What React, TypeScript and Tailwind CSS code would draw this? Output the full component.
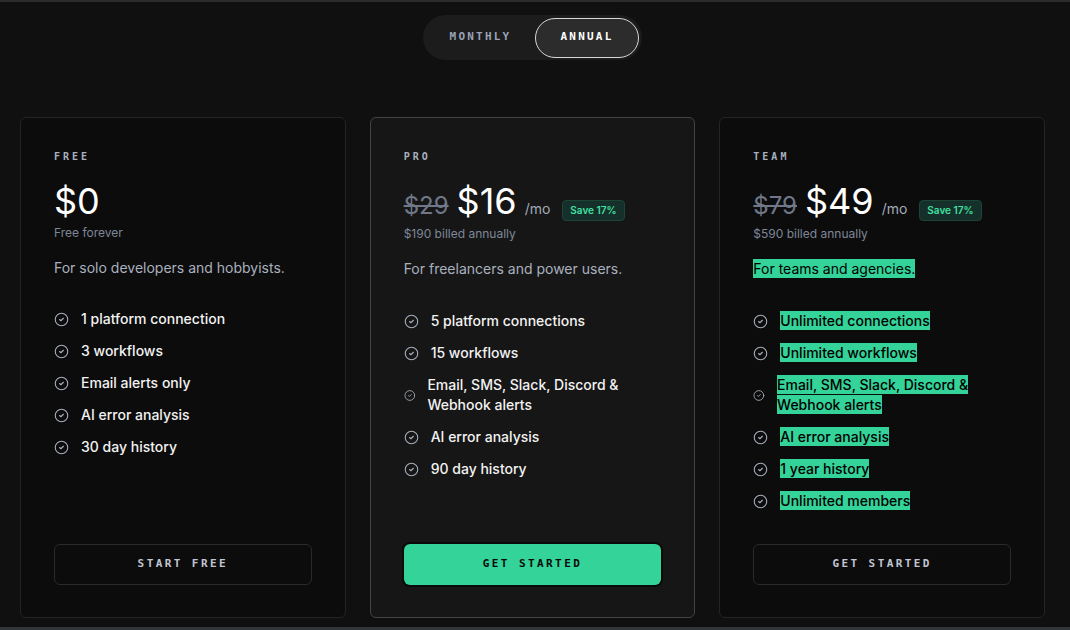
import { CircleCheck } from "lucide-react";

type Plan = {
    name: string;
    price: string;
    was?: string;
    note: string;
    blurb: string;
    features: string[];
    cta: string;
    featured?: boolean;
    marked?: boolean;
};

const plans: Plan[] = [
    {
        name: "FREE",
        price: "$0",
        note: "Free forever",
        blurb: "For solo developers and hobbyists.",
        features: ["1 platform connection", "3 workflows", "Email alerts only", "AI error analysis", "30 day history"],
        cta: "START FREE",
    },
    {
        name: "PRO",
        price: "$16",
        was: "$29",
        note: "$190 billed annually",
        blurb: "For freelancers and power users.",
        features: [
            "5 platform connections",
            "15 workflows",
            "Email, SMS, Slack, Discord & Webhook alerts",
            "AI error analysis",
            "90 day history",
        ],
        cta: "GET STARTED",
        featured: true,
    },
    {
        name: "TEAM",
        price: "$49",
        was: "$79",
        note: "$590 billed annually",
        blurb: "For teams and agencies.",
        features: [
            "Unlimited connections",
            "Unlimited workflows",
            "Email, SMS, Slack, Discord & Webhook alerts",
            "AI error analysis",
            "1 year history",
            "Unlimited members",
        ],
        cta: "GET STARTED",
        marked: true,
    },
];

const mono = "font-['DejaVu_Sans_Mono',monospace]";

// selected-text look used on the team card
function Marked({ on, children }: { on?: boolean; children: React.ReactNode }) {
    if (!on) return <>{children}</>;
    return <span className="bg-[#34d399] text-black py-px box-decoration-clone">{children}</span>;
}

function PlanCard({ plan }: { plan: Plan }) {
    return (
        <div
            className={`flex flex-col h-[501px] rounded-md border px-[33px] pt-8 pb-8 ${
                plan.featured ? "bg-[#161616] border-[#434343]" : "bg-[#0c0c0c] border-[#242424]"
            }`}
        >
            <div className={`${mono} text-[10px] leading-[14px] font-bold tracking-[0.3em] text-[#a9b0bf]`}>{plan.name}</div>

            <div className="mt-[19px] flex items-baseline h-[38px]">
                {plan.was && (
                    <span className="text-[24px] leading-none text-[#6f7789] line-through decoration-[1.5px] mr-[8px]">{plan.was}</span>
                )}
                <span className="text-[36px] leading-none text-white">{plan.price}</span>
                {plan.was && (
                    <>
                        <span className="ml-[8px] text-[14px] text-[#a3aab8]">/mo</span>
                        <span className="ml-3 rounded-[4px] border border-[#1d4536] bg-[#15302a] px-[7px] py-[2px] text-[10px] font-semibold text-[#42e0a2]">
                            Save 17%
                        </span>
                    </>
                )}
            </div>

            <div className={`${plan.was ? "mt-[5px]" : "mt-1"} text-[12px] leading-4 text-[#7e8698]`}>{plan.note}</div>

            <p className="mt-[17px] text-[14px] leading-5 text-[#aab1be]">
                <Marked on={plan.marked}>{plan.blurb}</Marked>
            </p>

            <ul className={`${plan.was ? "mt-[32px]" : "mt-[31px]"} flex flex-col gap-3`}>
                {plan.features.map((f) => (
                    <li key={f} className="flex items-center gap-3 text-[14px] leading-5 font-medium text-[#f2f2f2]">
                        <CircleCheck size={15} strokeWidth={1.75} className="text-[#a7aebb]" />
                        <span>
                            <Marked on={plan.marked}>{f}</Marked>
                        </span>
                    </li>
                ))}
            </ul>

            <button
                className={`${mono} mt-auto h-[41px] rounded-md text-[11px] font-bold tracking-[0.22em] ${
                    plan.featured
                        ? "bg-[#34d399] text-[#0a0a0a] shadow-[0_0_0_2px_#0a0a0a]"
                        : "border border-[#2a2a2a] text-[#c0c6d2]"
                }`}
            >
                {plan.cta}
            </button>
        </div>
    );
}

export default function App() {
    return (
        <div className="h-[630px] flex flex-col bg-[#101010] border-t-2 border-[#2c2c2c] font-['Inter',sans-serif] overflow-hidden">
            <div className="flex justify-center pt-[13px] pr-[5px]">
                <div className="flex items-center h-[45px] w-[219px] rounded-full bg-[#1c1c1c] p-[3px]">
                    <button className={`${mono} flex-1 text-[11px] font-bold tracking-[0.2em] text-[#9aa3b8]`}>MONTHLY</button>
                    <button
                        className={`${mono} h-[40px] w-[104px] rounded-full border-[1.5px] border-[#d8d8d8] bg-[#2c2c2c] text-[11px] font-bold tracking-[0.2em] text-white`}
                    >
                        ANNUAL
                    </button>
                </div>
            </div>

            <div className="mt-[57px] grid grid-cols-3 gap-6 pl-5 pr-[25px]">
                {plans.map((p) => (
                    <PlanCard key={p.name} plan={p} />
                ))}
            </div>

            <div className="mt-auto h-[3px] bg-[#30363a]" />
        </div>
    );
}
